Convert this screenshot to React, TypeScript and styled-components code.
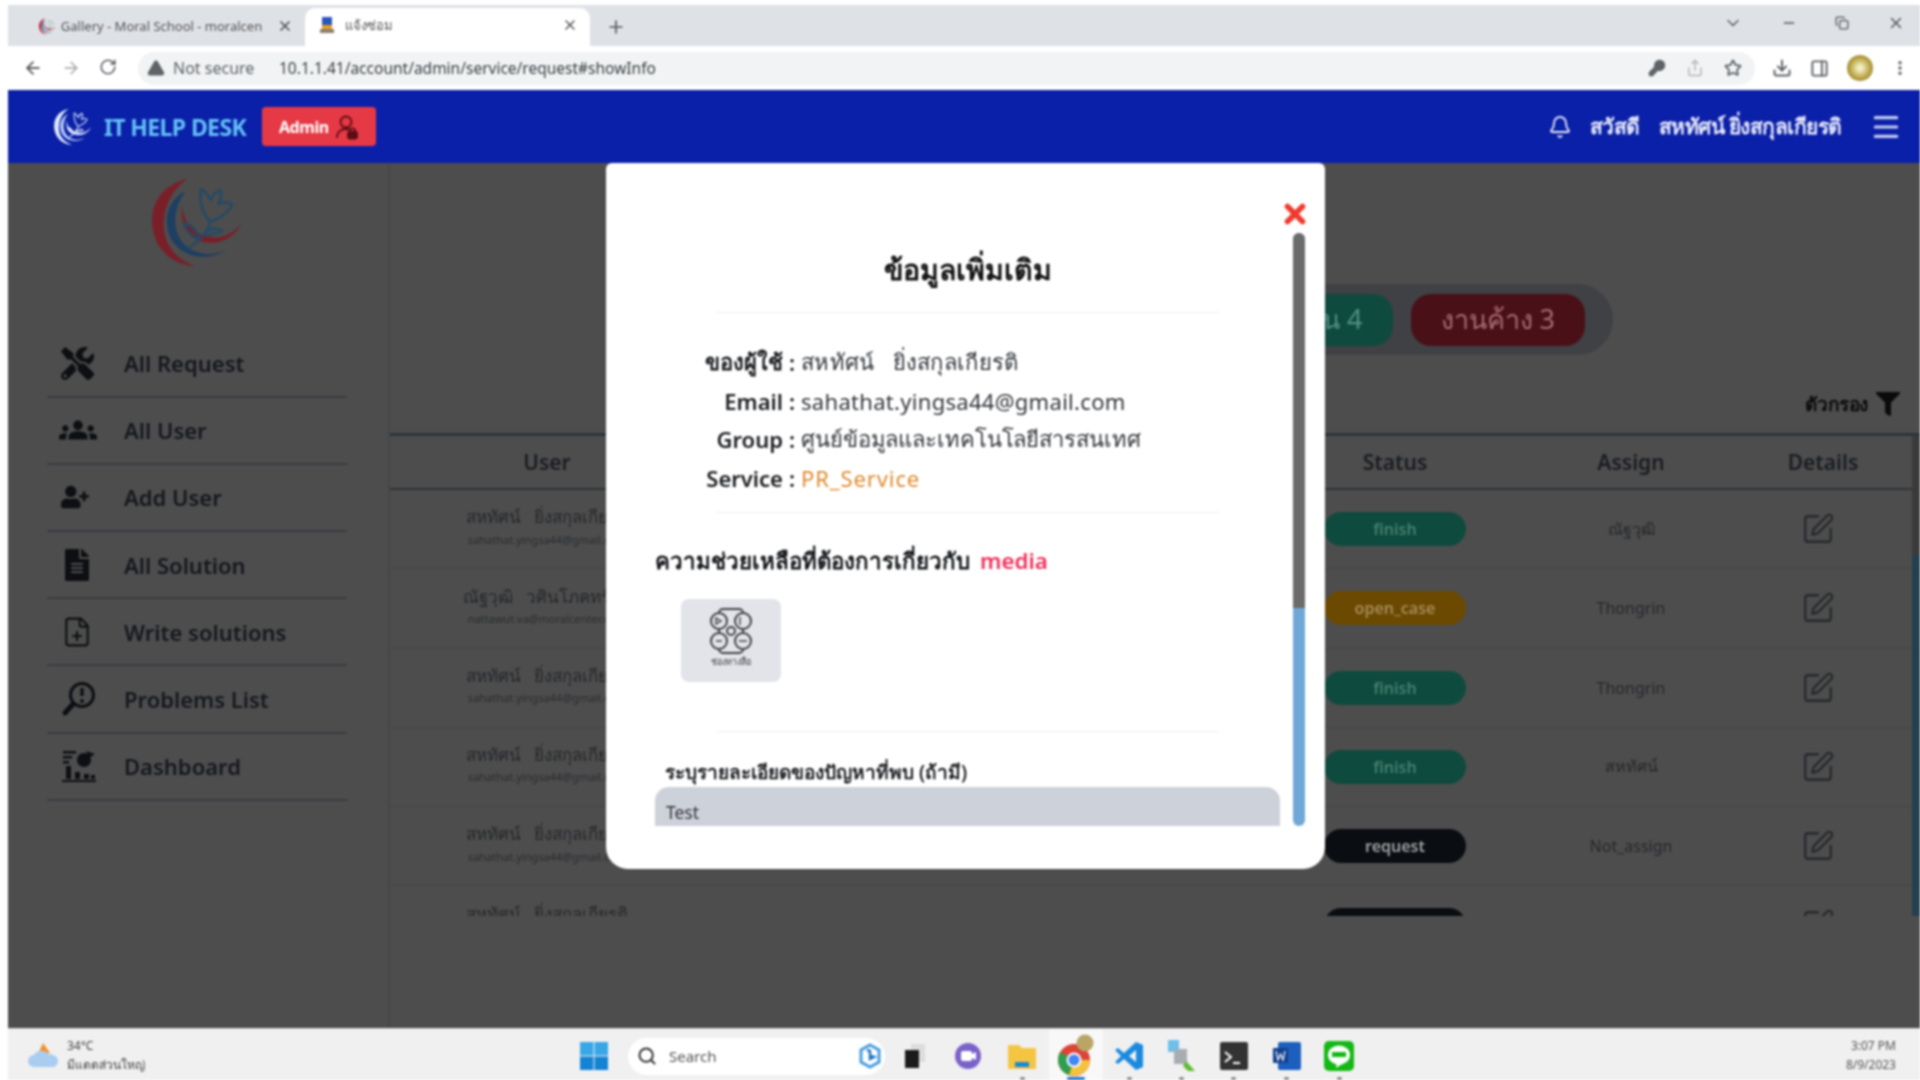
import React from "react";
import styled, { createGlobalStyle } from "styled-components";
import {
  ArrowLeft, ArrowRight, RotateCw, TriangleAlert, X, Plus, ChevronDown, Minus, Copy, KeyRound, Share, Star,
  Download, PanelRight, EllipsisVertical, Bell, Menu, FilePlus, SquarePen, Search,
} from "lucide-react";
import { FaTools, FaFileAlt, FaFilter, FaUserPlus } from "react-icons/fa";
import { MdGroups } from "react-icons/md";

const FONT = `"Noto Sans", "Open Sans", "Noto Sans CJK SC", sans-serif`;

const Global = createGlobalStyle`
  html, body { margin: 0; padding: 0; background: #fff; }
  body { font-family: ${FONT}; }
  * { box-sizing: border-box; }
`;

const Screen = styled.div`
  width: 1920px; height: 1080px; padding: 5px 0 0 8px; display: flex; flex-direction: column;
  overflow: hidden; background: #fff; filter: blur(0.9px);
`;
const TabStrip = styled.div`
  height: 41px; flex: none; background: #dee1e6; display: flex; align-items: flex-end; padding-left: 22px; color: #4a4d52;
`;
const Tab = styled.div<{ $active?: boolean }>`
  height: ${(p) => (p.$active ? "38px" : "36px")}; width: ${(p) => (p.$active ? "285px" : "275px")};
  background: ${(p) => (p.$active ? "#fff" : "transparent")}; border-radius: 10px 10px 0 0;
  display: flex; align-items: center; gap: ${(p) => (p.$active ? "10px" : "5px")};
  padding: 0 12px 4px ${(p) => (p.$active ? "14px" : "8px")}; font-size: 13px; color: #555;
  white-space: nowrap;
`;
const TabTitle = styled.span`flex: 1; overflow: hidden;`;
const NewTab = styled.div`margin: 0 0 9px 16px; display: flex; color: #555;`;
const WinControls = styled.div`
  margin-left: auto; height: 100%; display: flex; align-items: center; gap: 38px; padding: 0 15px 6px 0; color: #55585c;
`;
const Toolbar = styled.div`
  height: 44px; flex: none; background: #fff; display: flex; align-items: center; padding-left: 15px; color: #5f6368;
`;
const NavIcons = styled.div`display: flex; gap: 18px; width: 115px;`;
const Omnibox = styled.div`
  width: 1617px; height: 33px; border-radius: 17px; background: #f1f3f4; display: flex; align-items: center;
  padding: 0 13px 0 9px; font-size: 15.5px;
`;
const Secure = styled.div`
  display: flex; align-items: center; gap: 8px; color: #5f6368; width: 132px; font-size: 16px; white-space: nowrap;
`;
const Url = styled.span`color: #3c4043; flex: 1;`;
const OmniIcons = styled.div`display: flex; gap: 20px; align-items: center;`;
const ToolRight = styled.div`display: flex; align-items: center; gap: 18px; margin-left: 17px;`;
const Avatar = styled.div`
  width: 26px; height: 26px; border-radius: 50%; background: radial-gradient(circle, #f2f0c0 10%, #b59a3c 60%, #6f8f3e 100%);
`;
const Header = styled.header`
  height: 73px; flex: none; background: #0b20a8; display: flex; align-items: center; padding: 0 18px 0 44px; color: #fff;
`;
const Brand = styled.div`
  margin-left: 12px; font-size: 23px; font-weight: 700; letter-spacing: -0.6px; color: #62c0f5; width: 158px; white-space: nowrap;
`;
const AdminBtn = styled.div`
  width: 114px; height: 39px; border-radius: 4px; background: #e63946; display: flex; align-items: center;
  justify-content: center; gap: 6px; font-size: 16px; font-weight: 700; letter-spacing: -0.4px; color: #fff;
`;
const HeaderRight = styled.div`margin-left: auto; display: flex; align-items: center; font-size: 21px; font-weight: 700; color: #e6e9fa;`;
const Hello = styled.span`margin: 0 19px 0 18px; letter-spacing: -0.5px;`;
const UserName = styled.span`letter-spacing: -0.5px; margin-right: 28px;`;
const Body = styled.div`flex: 1; position: relative; display: flex; background: #4d4d4d; min-height: 0;`;
const Sidebar = styled.aside`
  width: 382px; flex: none; border-right: 2px solid #464646; padding: 14px 0 0 39px;
`;
const LogoWrap = styled.div`height: 153.5px; padding-left: 100px;`;
const NavItem = styled.div`
  width: 300px; height: 67.2px; border-bottom: 2px solid #383c42; display: flex; align-items: center; color: #15181e;
  font-size: 22px; font-weight: 600; padding-left: 14px;
`;
const NavIcon = styled.span`width: 63px; display: flex; color: #0d0f13;`;
const Main = styled.main`flex: 1; min-width: 0; display: flex; flex-direction: column; padding-top: 121px;`;
const PillRow = styled.div`display: flex; justify-content: flex-end; padding-right: 307px;`;
const PillGroup = styled.div`
  height: 71px; border-radius: 36px; background: #3f4144; display: flex; align-items: center; gap: 18px; padding: 0 28px;
`;
const CountPill = styled.div<{ $bg: string; $fg: string }>`
  height: 52px; padding: 0 30px; border-radius: 20px; display: flex; align-items: center;
  background: ${(p) => p.$bg}; color: ${(p) => p.$fg}; font-size: 27px; white-space: nowrap;
`;
const FilterRow = styled.div`
  height: 78px; padding: 20px 20px 0 0; display: flex; justify-content: flex-end; align-items: center; gap: 8px;
  font-size: 19px; font-weight: 600; color: #0b0b0b; letter-spacing: -0.4px;
`;
const TableWrap = styled.div`position: relative; height: 483px; overflow: hidden; border-top: 3px solid #2f3338;`;
const Grid = styled.div`display: grid; grid-template-columns: 314px 606px 170px 302px 82px; align-items: center; justify-items: center;`;
const HeadRow = styled(Grid)`
  height: 54px; border-bottom: 2px solid #2f3338; font-size: 21px; font-weight: 600; color: #1a1d22;
`;
const Row = styled(Grid)`height: 79.25px; border-bottom: 1px solid #454545; color: #26282c; font-size: 16px;`;
const UserCell = styled.div`display: flex; flex-direction: column; align-items: center; font-size: 17px; line-height: 1.3; white-space: pre; padding-bottom: 5px;`;
const UserMail = styled.span`font-size: 11px; color: #2a2c31; margin-top: 4px;`;
const StatusPill = styled.div<{ $bg: string; $fg: string }>`
  width: 142px; height: 34px; border-radius: 17px; background: ${(p) => p.$bg}; color: ${(p) => p.$fg};
  font-size: 16px; font-weight: 600; display: flex; align-items: center; justify-content: center;
`;
const EditWrap = styled.span`display: flex; color: #26282c; margin-right: 10px;`;
const TableScroll = styled.div`
  position: absolute; right: 0; top: 0; bottom: 0; width: 8px; background: #24404f;
  &::before { content: ""; display: block; height: 119px; background: #3a3a3a; }
`;
const Modal = styled.div`
  position: absolute; left: 598px; top: 0; width: 719px; height: 706px; background: #fff; border-radius: 6px 6px 22px 22px;
  padding-top: 70px; color: #14161a;
`;
const CloseBtn = styled.div`position: absolute; right: 15px; top: 36px; display: flex; color: #ef3b2d;`;
const ScrollArea = styled.div`position: relative; height: 593px; overflow: hidden;`;
const ModalScrollbar = styled.div`
  position: absolute; left: 687px; top: 0; bottom: 0; width: 12px; border-radius: 6px; background: #6fa8d6; overflow: hidden;
  &::before { content: ""; display: block; height: 375px; background: #6b6b6b; }
`;
const Content = styled.div`margin-left: 49px; width: 625px; padding-top: 16px;`;
const Title = styled.h2`margin: 0; height: 40px; line-height: 40px; font-size: 28.5px; font-weight: 600; text-align: center; color: #111;`;
const Rule = styled.hr<{ $top: number; $bottom: number }>`
  border: 0; height: 1px; background: #eeeeee; margin: ${(p) => p.$top}px 61px ${(p) => p.$bottom}px;
`;
const InfoGrid = styled.div`display: grid; grid-template-columns: 128px 18px 1fr; grid-auto-rows: 38.5px; align-items: center; font-size: 22px;`;
const InfoLabel = styled.span`text-align: right; font-weight: 600; color: #1c1e22; white-space: nowrap;`;
const InfoColon = styled.span`text-align: center; font-weight: 600;`;
const InfoValue = styled.span<{ $accent?: boolean; $spacing: number }>`
  color: ${(p) => (p.$accent ? "#e08a2c" : "#33363b")}; white-space: pre; letter-spacing: ${(p) => p.$spacing}px;
`;
const HelpTitle = styled.div`height: 32px; line-height: 32px; font-size: 22.3px; font-weight: 600; color: #15171b; white-space: nowrap;`;
const Media = styled.span`color: #f0305a; margin-left: 10px;`;
const AttachCard = styled.div`
  margin: 22px 0 0 26px; width: 100px; height: 83px; border-radius: 8px; background: #e2e4e9; display: flex; flex-direction: column;
  align-items: center; padding-top: 8px; color: #3b3d42;
`;
const AttachLabel = styled.span`font-size: 9px; line-height: 12px; color: #444; margin-top: 1px;`;
const FieldLabel = styled.div`height: 26px; line-height: 26px; padding: 1px 0 0 10px; font-size: 19px; font-weight: 600; color: #1d1f23; white-space: nowrap;`;
const FieldBox = styled.div`
  margin-top: 3px; height: 60px; border-radius: 14px 14px 0 0; background: #cdd1d9; padding: 13px 11px; font-size: 17.5px; color: #30333a; line-height: 24px;
`;
const Taskbar = styled.footer`
  height: 52px; flex: none; background: #f0f0f0; border-top: 1px solid #d4d4d4; display: flex; align-items: center; padding-left: 20px;
`;
const Weather = styled.div`width: 546px; display: flex; align-items: center; gap: 7px; flex: none;`;
const WeatherText = styled.div`font-size: 12px; line-height: 19px; color: #444; white-space: nowrap;`;
const Dock = styled.div`display: flex; align-items: stretch; align-self: stretch; flex: none;`;
const DockSlot = styled.div<{ $w: number; $run?: boolean; $active?: boolean }>`
  width: ${(p) => p.$w}px; display: flex; justify-content: center; align-items: center; flex: none; position: relative; padding-top: 3px;
  ${(p) => (p.$active ? "background: #f8f8f8;" : "")}
  ${(p) =>
    p.$run
      ? `&::after { content: ""; position: absolute; bottom: 0; left: 50%; height: 3px; border-radius: 2px;
         width: ${p.$active ? "18px" : "5px"}; margin-left: ${p.$active ? "-9px" : "-2.5px"};
         background: ${p.$active ? "#1a78d0" : "#8a8a8a"}; }`
      : ""}
`;
const SearchBox = styled.div`
  width: 257px; height: 37px; border-radius: 19px; background: #fff; display: flex; align-items: center; padding: 0 2px 0 9px; gap: 12px;
  margin: 3px 4px 0 14px; align-self: center; font-size: 15px; color: #555; flex: none;
`;
const SearchText = styled.span`flex: 1;`;
const Clock = styled.div`margin-left: auto; padding-right: 24px; text-align: right; font-size: 12px; line-height: 19px; color: #555;`;

const MoonLogo = ({ size, c1, c2, c3 }: { size: number; c1: string; c2: string; c3: string }) => (
  <svg width={size * 1.05} height={size} viewBox="0 0 100 95" fill="none">
    <path d="M42 2C14 8 2 30 6 54c4 24 24 38 44 38C26 84 14 64 18 40 21 22 30 10 42 2Z" fill={c1} />
    <path d="M40 14C22 24 16 42 24 62c8 18 34 28 58 14-22 8-42 2-50-16C26 44 30 28 40 14Z" fill={c2} />
    <path d="M36 30c-2 20 8 38 30 38 14 0 26-8 32-20-8 10-20 16-32 14-18-2-28-16-30-32Z" fill={c1} />
    <g stroke={c3} strokeWidth="2.6" strokeLinejoin="round">
      <path d="M66 46c-10-8-12-24-10-34 6 4 8 8 10 12 2-6 6-10 10-10 2 6 0 10-2 14 4-2 10-2 14 0-2 8-12 14-22 18Z" />
      <path d="M66 46c-4 10-8 18-24 28M58 60c6 0 14-2 20-4-4-4-14-4-20 4ZM54 64c-8-2-14-10-16-16 8 0 14 8 16 16Z" />
    </g>
  </svg>
);
const AdminIcon = () => (
  <svg width="24" height="26" viewBox="0 0 24 26" fill="none" stroke="#5a0d14" strokeWidth="1.8">
    <circle cx="11" cy="8" r="5.5" />
    <path d="M2 24c0-6 4-9 9-9 2 0 3 .3 4 1" />
    <rect x="13" y="18" width="9" height="6.5" rx="1.5" fill="#5a0d14" />
    <circle cx="17.5" cy="17" r="2.6" />
  </svg>
);
const ProblemIcon = () => (
  <svg width="36" height="36" viewBox="0 0 36 36" fill="none" stroke="#0d0f13">
    <circle cx="21" cy="14" r="11.5" strokeWidth="3" />
    <path d="M12 23 4 32" strokeWidth="5" strokeLinecap="round" />
    <path d="M21 7v8" strokeWidth="3.4" />
    <circle cx="21" cy="20" r="2" fill="#0d0f13" stroke="none" />
  </svg>
);
const DashIcon = () => (
  <svg width="36" height="34" viewBox="0 0 36 34" fill="#0d0f13">
    <rect x="2" y="2" width="13" height="2.5" /><rect x="2" y="7" width="9" height="2.5" /><rect x="2" y="12" width="6" height="2.5" />
    <circle cx="23" cy="11" r="7" /><path d="M25 2l9 3-6 4Z" />
    <rect x="5" y="17" width="5" height="13" /><rect x="14" y="23" width="5" height="7" /><rect x="23" y="25" width="5" height="5" /><rect x="30" y="26" width="4" height="4" />
    <rect x="1" y="31" width="34" height="2" />
  </svg>
);
const Win11 = () => (
  <svg width="30" height="30" viewBox="0 0 30 30">
    <rect x="1" y="1" width="13.5" height="13.5" fill="#39a6e6" /><rect x="15.5" y="1" width="13.5" height="13.5" fill="#39a6e6" />
    <rect x="1" y="15.5" width="13.5" height="13.5" fill="#1583d4" /><rect x="15.5" y="15.5" width="13.5" height="13.5" fill="#1583d4" />
  </svg>
);
const BingBadge = () => (
  <svg width="26" height="26" viewBox="0 0 26 26"><path d="M13 2l9 5v12l-9 5-9-5V7Z" fill="none" stroke="#4a9fe0" strokeWidth="3" /><path d="M10 7l3 1v8l4-2-3-1" fill="none" stroke="#2477c5" strokeWidth="2.5" /></svg>
);
const TaskView = () => (
  <svg width="24" height="26" viewBox="0 0 24 26"><rect x="8" y="1" width="14" height="18" fill="#dcdcdc" /><rect x="2" y="7" width="14" height="18" fill="#1a1a1a" /></svg>
);
const Chat = () => (
  <svg width="28" height="28" viewBox="0 0 28 28"><circle cx="14" cy="14" r="13" fill="#7b62c9" /><rect x="7" y="9" width="11" height="10" rx="2" fill="#fff" /><path d="M18 12l4-2v8l-4-2Z" fill="#fff" /></svg>
);
const Folder = () => (
  <svg width="30" height="28" viewBox="0 0 30 28"><path d="M1 3h11l3 3h14v21H1Z" fill="#f4c542" /><rect x="8" y="20" width="14" height="5" fill="#1a88d8" /></svg>
);
const ChromeIcon = () => (
  <svg width="36" height="44" viewBox="0 0 36 44">
    <g transform="translate(0 8)">
      <circle cx="16" cy="18" r="16" fill="#dc4437" />
      <path d="M16 18 2 10a16 16 0 0 0 9 23Z" fill="#2f9e4f" /><path d="M16 18h16a16 16 0 0 1-21 15Z" fill="#f4c33d" />
      <circle cx="16" cy="18" r="7.5" fill="#fff" /><circle cx="16" cy="18" r="5.5" fill="#4285f4" />
    </g>
    <circle cx="27" cy="9" r="8.5" fill="#b9a566" />
  </svg>
);
const VSCode = () => (
  <svg width="30" height="30" viewBox="0 0 30 30"><path d="M22 1l7 3v22l-7 3-12-11-6 5-3-2 6-6-6-6 3-2 6 5Z" fill="#1a8ae0" /><path d="M22 9l-7 6 7 6Z" fill="#f0f0f0" /></svg>
);
const Snip = () => (
  <svg width="30" height="34" viewBox="0 0 30 34"><rect x="2" y="1" width="11" height="12" fill="#6cc0ea" /><rect x="8" y="10" width="13" height="15" fill="#a8adb3" /><path d="M20 22l9 10h-7l-5-5Z" fill="#63bb33" /></svg>
);
const Term = () => (
  <svg width="30" height="30" viewBox="0 0 30 30"><rect x="1" y="1" width="28" height="28" rx="2" fill="#333" /><path d="M6 11l6 5-6 5" stroke="#fff" strokeWidth="2" fill="none" /><path d="M14 22h7" stroke="#fff" strokeWidth="2" /></svg>
);
const Word = () => (
  <svg width="30" height="30" viewBox="0 0 30 30"><rect x="6" y="1" width="23" height="28" rx="2" fill="#1c5fbf" /><rect x="1" y="7" width="15" height="15" rx="1" fill="#123f8e" /><path d="M4 10l2 9 2.5-6 2.5 6 2-9" stroke="#fff" strokeWidth="1.2" fill="none" /></svg>
);
const LineApp = () => (
  <svg width="30" height="30" viewBox="0 0 30 30"><rect x="0" y="0" width="30" height="30" rx="5" fill="#14b814" /><ellipse cx="15" cy="14" rx="11" ry="9.5" fill="#fff" /><path d="M13 22l-1 5 6-4Z" fill="#fff" /><rect x="8" y="11" width="14" height="5" fill="#14b814" /></svg>
);
const Weather3 = () => (
  <svg width="32" height="28" viewBox="0 0 32 28"><path d="M15 2l7 10-12 1Z" fill="#f2902c" /><path d="M6 26a6 6 0 0 1 0-12c2-5 11-6 14-1 6 0 10 3 10 7s-3 6-6 6Z" fill="#a9cdf0" /></svg>
);
const AttachArt = () => (
  <svg width="46" height="48" viewBox="0 0 46 48" fill="none" stroke="#3f4145" strokeWidth="2">
    <rect x="11" y="2" width="24" height="44" rx="4" />
    <circle cx="11" cy="14" r="8" fill="#e2e4e9" /><circle cx="35" cy="14" r="8" fill="#e2e4e9" />
    <circle cx="11" cy="34" r="8" fill="#e2e4e9" /><circle cx="35" cy="34" r="8" fill="#e2e4e9" />
    <circle cx="23" cy="24" r="4" />
    <path d="M8 11v6l5-3ZM32 10v8M31 34h8M8 34h6" strokeWidth="1.4" />
  </svg>
);

const navItems: [React.ReactNode, string][] = [
  [<FaTools size={33} />, "All Request"],
  [<MdGroups size={38} style={{ marginLeft: -2 }} />, "All User"],
  [<FaUserPlus size={28} />, "Add User"],
  [<FaFileAlt size={32} />, "All Solution"],
  [<FilePlus size={32} strokeWidth={1.6} />, "Write solutions"],
  [<ProblemIcon />, "Problems List"],
  [<DashIcon />, "Dashboard"],
];

const U1 = ["สหทัศน์   ยิ่งสกุลเกียรติ", "sahathat.yingsa44@gmail.com"];
const U2 = ["ณัฐวุฒิ   วศินโภคทรัพย์", "nattawut.va@moralcenter.or.th"];
const STATUS: Record<string, [string, string]> = {
  finish: ["#0f4a3e", "#44806f"],
  open_case: ["#6b4a00", "#a58a58"],
  request: ["#0a0d12", "#a5a5a5"],
};
const rows: [string[], string, string][] = [
  [U1, "finish", "ณัฐวุฒิ"],
  [U2, "open_case", "Thongrin"],
  [U1, "finish", "Thongrin"],
  [U1, "finish", "สหทัศน์"],
  [U1, "request", "Not_assign"],
  [U1, "request", "Not_assign"],
];

export default function App() {
  return (
    <>
      <Global />
      <Screen>
        <TabStrip>
          <Tab>
            <MoonLogo size={17} c1="#c8202f" c2="#2a5fa8" c3="#7a9" />
            <TabTitle>Gallery - Moral School - moralcen</TabTitle>
            <X size={16} strokeWidth={2.6} />
          </Tab>
          <Tab $active>
            <svg width="16" height="18" viewBox="0 0 16 18"><rect x="3" y="1" width="10" height="8" fill="#2a55c0" /><rect x="3" y="9" width="10" height="4" fill="#e8a020" /><rect x="1" y="13" width="14" height="4" fill="#8a7f70" /></svg>
            <TabTitle>แจ้งซ่อม</TabTitle>
            <X size={16} strokeWidth={2.2} />
          </Tab>
          <NewTab><Plus size={20} /></NewTab>
          <WinControls>
            <ChevronDown size={20} strokeWidth={1.6} />
            <Minus size={16} />
            <Copy size={14} strokeWidth={2.2} />
            <X size={18} strokeWidth={2} />
          </WinControls>
        </TabStrip>
        <Toolbar>
          <NavIcons>
            <ArrowLeft size={20} strokeWidth={2.2} />
            <ArrowRight size={20} strokeWidth={1.6} color="#a0a3a8" />
            <RotateCw size={18} strokeWidth={2.2} />
          </NavIcons>
          <Omnibox>
            <Secure><TriangleAlert size={18} fill="#5f6368" color="#5f6368" />Not secure</Secure>
            <Url>10.1.1.41/account/admin/service/request#showInfo</Url>
            <OmniIcons>
              <KeyRound size={18} fill="#5f6368" />
              <Share size={18} color="#b3b6ba" />
              <Star size={18} strokeWidth={2.4} />
            </OmniIcons>
          </Omnibox>
          <ToolRight>
            <Download size={20} strokeWidth={2.4} />
            <PanelRight size={19} strokeWidth={2.4} />
            <Avatar />
            <EllipsisVertical size={18} strokeWidth={2.6} />
          </ToolRight>
        </Toolbar>
        <Header>
          <MoonLogo size={38} c1="#dfe8ff" c2="#b9cdfa" c3="#dfe8ff" />
          <Brand>IT HELP DESK</Brand>
          <AdminBtn>Admin<AdminIcon /></AdminBtn>
          <HeaderRight>
            <Bell size={24} strokeWidth={1.8} />
            <Hello>สวัสดี</Hello>
            <UserName>สหทัศน์ ยิ่งสกุลเกียรติ</UserName>
            <Menu size={32} strokeWidth={2.4} color="#c4cbf0" />
          </HeaderRight>
        </Header>
        <Body>
          <Sidebar>
            <LogoWrap>
              <MoonLogo size={92} c1="#7a1f28" c2="#1d3f63" c3="#244a66" />
            </LogoWrap>
            {navItems.map(([icon, label]) => (
              <NavItem key={label}><NavIcon>{icon}</NavIcon>{label}</NavItem>
            ))}
          </Sidebar>
          <Main>
            <PillRow>
              <PillGroup>
                <CountPill $bg="#0f4a3e" $fg="#4f9080">งานเสร็จสิ้น 4</CountPill>
                <CountPill $bg="#4a1018" $fg="#a66a72">งานค้าง 3</CountPill>
              </PillGroup>
            </PillRow>
            <FilterRow>ตัวกรอง <FaFilter size={24} /></FilterRow>
            <TableWrap>
              <HeadRow>
                <span>User</span><span>Topic</span><span>Status</span><span>Assign</span><span>Details</span>
              </HeadRow>
              {rows.map(([u, status, assign], i) => (
                <Row key={i}>
                  <UserCell>{u[0]}<UserMail>{u[1]}</UserMail></UserCell>
                  <span />
                  <StatusPill $bg={STATUS[status][0]} $fg={STATUS[status][1]}>{status}</StatusPill>
                  <span>{assign}</span>
                  <EditWrap><SquarePen size={34} strokeWidth={1.6} /></EditWrap>
                </Row>
              ))}
              <TableScroll />
            </TableWrap>
          </Main>
          <Modal>
            <CloseBtn><X size={30} strokeWidth={4.5} /></CloseBtn>
            <ScrollArea>
              <Content>
                <Title>ข้อมูลเพิ่มเติม</Title>
                <Rule $top={23} $bottom={30} />
                <InfoGrid>
                  <InfoLabel>ของผู้ใช้</InfoLabel><InfoColon>:</InfoColon><InfoValue $spacing={0.3}>สหทัศน์   ยิ่งสกุลเกียรติ</InfoValue>
                  <InfoLabel>Email</InfoLabel><InfoColon>:</InfoColon><InfoValue $spacing={0.3}>sahathat.yingsa44@gmail.com</InfoValue>
                  <InfoLabel>Group</InfoLabel><InfoColon>:</InfoColon><InfoValue $spacing={-0.1}>ศูนย์ข้อมูลและเทคโนโลยีสารสนเทศ</InfoValue>
                  <InfoLabel>Service</InfoLabel><InfoColon>:</InfoColon><InfoValue $accent $spacing={0.9}>PR_Service</InfoValue>
                </InfoGrid>
                <Rule $top={15} $bottom={32} />
                <HelpTitle>ความช่วยเหลือที่ต้องการเกี่ยวกับ<Media>media</Media></HelpTitle>
                <AttachCard><AttachArt /><AttachLabel>ช่องทางสื่อ</AttachLabel></AttachCard>
                <Rule $top={49} $bottom={26} />
                <FieldLabel>ระบุรายละเอียดของปัญหาที่พบ (ถ้ามี)</FieldLabel>
                <FieldBox>Test</FieldBox>
              </Content>
              <ModalScrollbar />
            </ScrollArea>
          </Modal>
        </Body>
        <Taskbar>
          <Weather>
            <Weather3 />
            <WeatherText>34°C<br />มีแดดส่วนใหญ่</WeatherText>
          </Weather>
          <Dock>
            <DockSlot $w={40}><Win11 /></DockSlot>
            <SearchBox><Search size={20} strokeWidth={2.4} color="#333" /><SearchText>Search</SearchText><BingBadge /></SearchBox>
            <DockSlot $w={52}><TaskView /></DockSlot>
            <DockSlot $w={54}><Chat /></DockSlot>
            <DockSlot $w={54} $run><Folder /></DockSlot>
            <DockSlot $w={54} $run $active><ChromeIcon /></DockSlot>
            <DockSlot $w={52} $run><VSCode /></DockSlot>
            <DockSlot $w={52} $run><Snip /></DockSlot>
            <DockSlot $w={53} $run><Term /></DockSlot>
            <DockSlot $w={53} $run><Word /></DockSlot>
            <DockSlot $w={52} $run><LineApp /></DockSlot>
          </Dock>
          <Clock>3:07 PM<br />8/9/2023</Clock>
        </Taskbar>
      </Screen>
    </>
  );
}
